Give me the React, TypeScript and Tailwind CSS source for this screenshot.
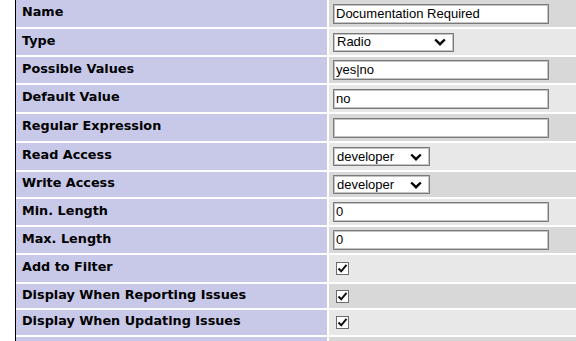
import React from 'react';

type Field =
  | { label: string; kind: 'text'; value: string; h: string }
  | { label: string; kind: 'select'; value: string; w: string; h: string }
  | { label: string; kind: 'check'; h: string };

const fields: Field[] = [
  { label: 'Name', kind: 'text', value: 'Documentation Required', h: 'h-[27px]' },
  { label: 'Type', kind: 'select', value: 'Radio', w: 'w-[121px]', h: 'h-[26px]' },
  { label: 'Possible Values', kind: 'text', value: 'yes|no', h: 'h-[26px]' },
  { label: 'Default Value', kind: 'text', value: 'no', h: 'h-[27px]' },
  { label: 'Regular Expression', kind: 'text', value: '', h: 'h-[27px]' },
  { label: 'Read Access', kind: 'select', value: 'developer', w: 'w-[97px]', h: 'h-[27px]' },
  { label: 'Write Access', kind: 'select', value: 'developer', w: 'w-[97px]', h: 'h-[25px]' },
  { label: 'Min. Length', kind: 'text', value: '0', h: 'h-[26px]' },
  { label: 'Max. Length', kind: 'text', value: '0', h: 'h-[26px]' },
  { label: 'Add to Filter', kind: 'check', h: 'h-[27px]' },
  { label: 'Display When Reporting Issues', kind: 'check', h: 'h-[24px]' },
  { label: 'Display When Updating Issues', kind: 'check', h: 'h-[25px]' },
  { label: '', kind: 'check', h: 'h-[25px]' },
];

const Chevron = () => (
  <svg width="12" height="8" viewBox="0 0 12 8" className="shrink-0">
    <path d="M1.2 1.5 L6 6.2 L10.8 1.5" fill="none" stroke="#000" strokeWidth="2.4" />
  </svg>
);

const Check = () => (
  <div className="flex h-[13px] w-[13px] items-center justify-center border border-[#6b6b6b] bg-white">
    <svg width="11" height="11" viewBox="0 0 11 11">
      <path d="M1.5 5.5 L4.2 8.3 L9.5 1.8" fill="none" stroke="#111" strokeWidth="2" />
    </svg>
  </div>
);

const FieldValue = ({ f }: { f: Field }) => {
  if (f.kind === 'text') {
    return (
      <div className="flex h-[20px] w-[216px] items-center border border-[#7a7a7a] bg-white px-[2px] shadow-[inset_0_0_0_1px_#c4c4c4] font-['Liberation_Sans',Arial,sans-serif] text-[13px] text-black">
        {f.value}
      </div>
    );
  }
  if (f.kind === 'select') {
    return (
      <div className={`flex h-[19px] ${f.w} items-center justify-between border border-[#7a7a7a] bg-white pl-[3px] pr-[7px] shadow-[inset_0_0_0_1px_#c4c4c4] font-['Liberation_Sans',Arial,sans-serif] text-[13px] text-black`}>
        <span>{f.value}</span>
        <Chevron />
      </div>
    );
  }
  return <div className="pl-[3px]"><Check /></div>;
};

export default function App() {
  return (
    <div className="h-[341px] w-[576px] overflow-hidden bg-white pl-[15px]">
      <div className="flex flex-col gap-[2px] border-l border-black">
        {fields.map((f, i) => (
          <div key={i} className={`flex gap-[2px] ${f.h}`}>
            <div className="flex w-[311px] shrink-0 items-center bg-[#c8c8e8] pb-[3px] pl-[6px] font-['DejaVu_Sans',Verdana,sans-serif] text-[12.8px] font-bold text-black">
              {f.label}
            </div>
            <div className={`flex flex-1 items-center pl-[4px] ${i % 2 === 0 ? 'bg-[#d8d8d8]' : 'bg-[#e8e8e8]'}`}>
              {f.label && <FieldValue f={f} />}
            </div>
          </div>
        ))}
      </div>
    </div>
  );
}
